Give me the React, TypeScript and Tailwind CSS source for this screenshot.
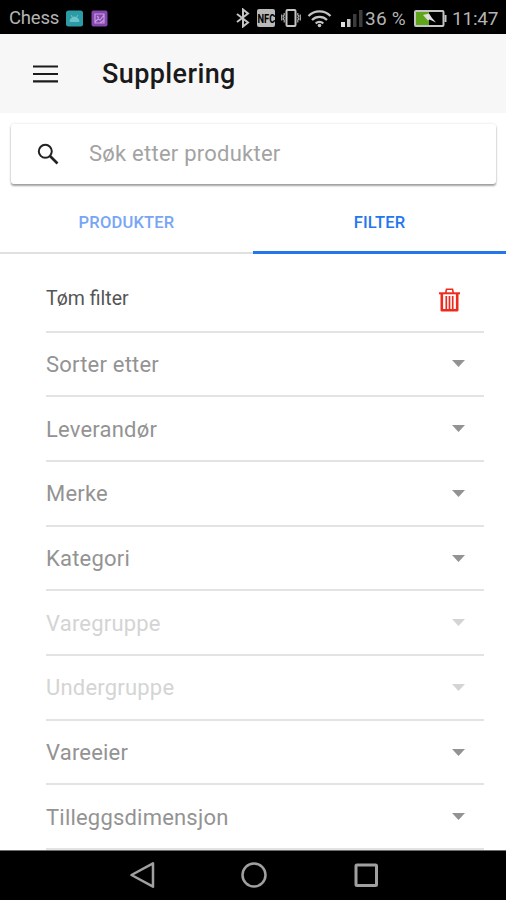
import clsx from "clsx";

const filters = [
  { label: "Sorter etter" },
  { label: "Leverandør" },
  { label: "Merke" },
  { label: "Kategori" },
  { label: "Varegruppe", disabled: true },
  { label: "Undergruppe", disabled: true },
  { label: "Vareeier" },
  { label: "Tilleggsdimensjon" },
];

function StatusBar() {
  return (
    <div className="flex h-[34px] shrink-0 items-center bg-black pt-[2px] pr-[8px] pl-[9px] text-[#b4b4b4]">
      <span className="w-[57px] text-[18.5px] leading-none tracking-[-0.2px]">
        Chess
      </span>
      <svg className="h-[17px] w-[17px]" viewBox="0 0 17 17">
        <rect width="17" height="16" y=".5" rx="2.5" fill="#2b9ba6" />
        <path
          d="M4 11.5a4.5 4.5 0 0 1 9 0zM5 5l1.5 2.5M12 5l-1.5 2.5"
          fill="#6cc3c9"
          stroke="#6cc3c9"
        />
      </svg>
      <svg className="ml-[8px] h-[17px] w-[17px]" viewBox="0 0 17 17">
        <rect width="16" height="16" x=".5" y=".5" rx="2" fill="#8447ad" />
        <path
          d="M4 4h9v9H4zM4 12l3-3 2 1 4-5M6 6l2 2M9 13l4-3"
          fill="none"
          stroke="#c79be0"
          strokeWidth="1.2"
        />
      </svg>
      <div className="flex-1" />
      <svg className="h-[20px] w-[14px]" viewBox="0 0 14 20">
        <path
          d="M1 6l11 8.5L7 18.5v-17L12 5.5 1 14"
          fill="none"
          stroke="#c4c4c4"
          strokeWidth="2"
        />
      </svg>
      <div className="ml-[7px] flex h-[18px] w-[18px] items-center justify-center rounded-[2px] bg-[#b9b9b9]">
        <span className="scale-x-[.72] text-[13px] leading-none font-bold text-black">
          NFC
        </span>
      </div>
      <svg className="ml-[6px] h-[18px] w-[20px]" viewBox="0 0 20 18">
        <rect x="5.5" y="1" width="9" height="16" rx="1" fill="none" stroke="#c4c4c4" strokeWidth="2" />
        <path
          d="M3.2 4v2l-1 1 1 1.5-1 1.5 1 1v2.500M.7 5.500v6M16.800 4v2l1 1-1 1.500 1 1.500-1 1v2.500M19.300 5.500v6"
          fill="none"
          stroke="#b0b0b0"
          strokeWidth="1.2"
        />
      </svg>
      <svg className="ml-[6px] h-[19px] w-[25px]" viewBox="0 0 25 19">
        <path
          d="M1.500 7a15.500 15.500 0 0 1 22 0M5 11a10.500 10.500 0 0 1 15 0M8.700 14.500a5.400 5.400 0 0 1 7.600 0"
          fill="none"
          stroke="#c4c4c4"
          strokeWidth="2.200"
        />
        <circle cx="12.500" cy="16.500" r="1.800" fill="#c4c4c4" />
      </svg>
      <svg className="ml-[9px] h-[19px] w-[23px]" viewBox="0 0 23 19">
        <rect x="0" y="13" width="4" height="5" fill="#e0e0e0" />
        <rect x="6" y="10" width="3.500" height="8" fill="#c4c4c4" />
        <rect x="12" y="5" width="3.500" height="13" fill="#3c3c3c" />
        <rect x="18" y="1" width="3.500" height="17" fill="#3c3c3c" />
      </svg>
      <span className="ml-[1px] w-[49px] text-[19px] leading-none tracking-[0.2px] whitespace-nowrap">
        36 %
      </span>
      <svg className="h-[17px] w-[33px]" viewBox="0 0 33 17">
        <rect x="1" y="1" width="28.500" height="15" rx="1" fill="none" stroke="#c4c4c4" strokeWidth="2" />
        <rect x="2" y="2" width="13" height="13" fill="#5fa51c" />
        <rect x="30.500" y="5" width="2" height="7" fill="#c4c4c4" />
        <path d="M9 5l6-1.500 3 4.500 4 4.500-6.500-3-1.500 1z" fill="#dedede" />
      </svg>
      <span className="ml-[5px] w-[46px] text-[19px] leading-none tracking-[-0.2px]">
        11:47
      </span>
    </div>
  );
}

function NavBar() {
  return (
    <div className="flex h-[50px] shrink-0 items-center justify-center gap-[86px] border-t border-[#6e6e6e] bg-black pb-[1px] pl-[1px]">
      <svg className="h-[28px] w-[26px]" viewBox="0 0 26 28" fill="none" stroke="#a0a0a0" strokeWidth="2.500">
        <path d="M2.500 14L24 2.300v23.400z" strokeLinejoin="round" />
      </svg>
      <svg className="h-[28px] w-[26px]" viewBox="0 0 26 28" fill="none" stroke="#a0a0a0" strokeWidth="2.500">
        <circle cx="13" cy="14" r="11.500" />
      </svg>
      <svg className="h-[28px] w-[26px]" viewBox="0 0 26 28" fill="none" stroke="#a0a0a0" strokeWidth="3">
        <rect x="3" y="4" width="20.500" height="20.500" rx="1" />
      </svg>
    </div>
  );
}

function FilterRow({ label, disabled }: { label: string; disabled?: boolean }) {
  return (
    <div
      className={clsx(
        "flex h-[64.700px] shrink-0 items-center justify-between border-b-2 border-[#e3e3e3] pr-[19px]",
        disabled ? "text-[#d4d4d4]" : "text-[#939393]",
      )}
    >
      <span className="pt-[2px] text-[22px] leading-none tracking-[0.2px]">
        {label}
      </span>
      <svg className="h-[7px] w-[13px]" viewBox="0 0 13 7" fill="currentColor">
        <path d="M0 0h13L6.500 7z" />
      </svg>
    </div>
  );
}

export default function App() {
  return (
    <div className="flex h-[900px] w-[506px] flex-col overflow-hidden bg-white font-[Roboto,sans-serif]">
      <StatusBar />
      <header className="flex h-[79px] shrink-0 items-center bg-[#f7f7f7] pl-[33px]">
        <svg className="h-[18px] w-[25px]" viewBox="0 0 25 18">
          <path d="M0 1.500h25M0 9h25M0 16.300h25" stroke="#1c1c1c" strokeWidth="2.200" />
        </svg>
        <h1 className="ml-[44px] pt-[2px] text-[27px] leading-none font-medium tracking-[0.4px] text-[#1a1a1a]">
          Supplering
        </h1>
      </header>
      <div className="mr-[10px] ml-[11px] mt-[11px] flex h-[60px] shrink-0 items-center rounded-[3px] bg-white pl-[26px] shadow-[0_2px_2px_rgba(0,0,0,0.35),0_0_3px_rgba(0,0,0,0.12)]">
        <svg className="h-[22px] w-[22px]" viewBox="0 0 22 22" fill="none" stroke="#222">
          <circle cx="8.300" cy="8.300" r="6.500" strokeWidth="2" />
          <path d="M13 13l7.500 7.500" strokeWidth="2.600" />
        </svg>
        <span className="ml-[30px] text-[22px] leading-none tracking-[0.24px] text-[#a3a3a3]">
          Søk etter produkter
        </span>
      </div>
      <nav className="mt-[10px] flex h-[60px] shrink-0 text-[16.500px] leading-none font-medium tracking-[0.2px]">
        <button className="flex-1 border-b-2 border-[#e0e0e0] text-[#78a5f5]">
          PRODUKTER
        </button>
        <button className="flex-1 border-b-[3px] border-[#2476ec] pt-[2px] text-[#2476ec]">
          FILTER
        </button>
      </nav>
      <main className="flex min-h-0 flex-1 flex-col overflow-hidden pr-[22px] pl-[46px]">
        <div className="flex h-[78.600px] shrink-0 items-center justify-between border-b-2 border-[#e3e3e3] pt-[12px] pr-[24px]">
          <span className="text-[19.500px] leading-none text-[#555]">
            Tøm filter
          </span>
          <svg className="mt-[4px] h-[24px] w-[21px]" viewBox="0 0 21 24" fill="none" stroke="#ee2a1c">
            <path d="M6.700 5l.8-3.800h6l.8 3.800" strokeWidth="1.600" />
            <path d="M0 5.300h21" strokeWidth="2" />
            <path d="M2.800 5.500v16.800h15.400V5.500" strokeWidth="2.600" strokeLinejoin="round" />
            <path d="M7.300 8v13M10.500 8v13M13.700 8v13" strokeWidth="1.700" />
          </svg>
        </div>
        {filters.map((filter) => (
          <FilterRow key={filter.label} {...filter} />
        ))}
      </main>
      <NavBar />
    </div>
  );
}
